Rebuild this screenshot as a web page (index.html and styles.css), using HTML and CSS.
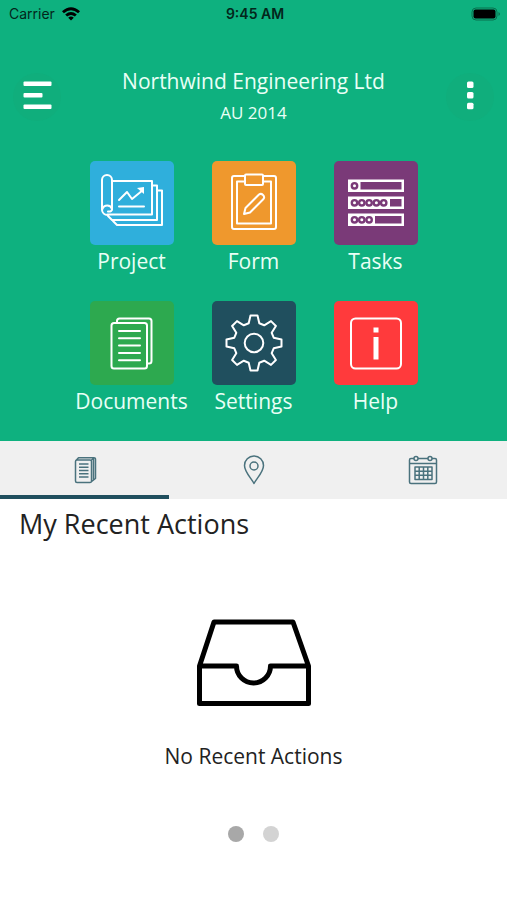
FILE: index.html
```html
<!DOCTYPE html>
<html lang="en">
<head>
<meta charset="utf-8">
<meta name="viewport" content="width=device-width, initial-scale=1">
<title>Northwind Engineering Ltd</title>
<link rel="stylesheet" href="styles.css">
</head>
<body>
<header class="hero">
  <div class="status">
    <div class="carrier">
      <span>Carrier</span>
      <svg class="wifi" viewBox="0 0 18 14" aria-hidden="true"><path d="M0 4.3Q9-3.6 18 4.3L16.1 6.3Q9 .2 1.9 6.3ZM3.2 7.5Q9 2.6 14.8 7.5L12.9 9.5Q9 6.3 5.1 9.5ZM6.2 10.7Q9 8.3 11.800 10.7L9 13.6Z"/></svg>
    </div>
    <span class="time">9:45 AM</span>
    <svg class="battery" viewBox="0 0 30 14" aria-hidden="true"><rect x="1" y="1" width="25" height="12" rx="4" fill="none" stroke="#08714f"/><rect x="2.500" y="2.500" width="22" height="9" rx="2"/><path d="M27.500 5q3 2 0 4z" fill="#08714f"/></svg>
  </div>
  <div class="bar">
    <button class="round" type="button" aria-label="Menu"><svg viewBox="0 0 48 48" fill="#fff"><rect x="10.500" y="8.500" width="28" height="4.500" rx="1"/><rect x="10.500" y="20" width="19" height="4.500" rx="1"/><rect x="10.500" y="31.500" width="28" height="4.500" rx="1"/></svg></button>
    <div class="heading">
      <h1>Northwind Engineering Ltd</h1>
      <p>AU 2014</p>
    </div>
    <button class="round" type="button" aria-label="More options"><svg viewBox="0 0 48 48" fill="#fff"><rect x="21" y="8.500" width="6.500" height="6.500" rx="1.500"/><rect x="21" y="19" width="6.500" height="6.500" rx="1.500"/><rect x="21" y="29.700" width="6.500" height="6.500" rx="1.500"/></svg></button>
  </div>
  <nav class="tiles">
    <a class="tile" href="#project">
      <svg class="icon blue" viewBox="0 0 84 84"><path d="M22 20H62V53.500H17.500M22 49V19a5 5 0 0 0-10 0V49a5.500 5.500 0 0 0 5.500 5M12.500 48a5 5 0 0 1 9.500 0q0 3-4 2.500M63 24.500H67V59H22l-4-4M68 29.500H72V64H27l-4-4"/><path d="M29 39l8-8 5 7 11-9M29 45.500H54"/><path d="M47 27l7-1v7z" fill="#fff" stroke="none"/></svg>
      <span>Project</span>
    </a>
    <a class="tile" href="#form">
      <svg class="icon orange" viewBox="0 0 84 84"><path d="M33 15H22a2 2 0 0 0-2 2V66a2 2 0 0 0 2 2H62a2 2 0 0 0 2-2V17a2 2 0 0 0-2-2H51M33 20.500H25V62.500H59V20.500H51"/><rect x="33" y="13.500" width="18" height="10.500" rx="1"/><path d="M32 53l1.500-6L47 33.500q2-1.500 4 .5t.5 4L38 51.500z"/></svg>
      <span>Form</span>
    </a>
    <a class="tile" href="#tasks">
      <svg class="icon purple" viewBox="0 0 84 84"><g fill="#fff" stroke="none"><path d="M14 18.500H70V31H14zM14 35.500H70V48H14zM14 52.500H70V65H14z"/></g><g fill="#7a3a78" stroke="none"><path d="M26.500 21H67.500V28.500H26.500zM56 38H67.500V45.500H56zM41 55H67.500V62.500H41z"/></g><g fill="#fff" stroke="#7a3a78" stroke-width="2.400"><circle cx="20.500" cy="24.800" r="2.700"/><circle cx="20.500" cy="41.800" r="2.700"/><circle cx="27.800" cy="41.800" r="2.700"/><circle cx="35.100" cy="41.800" r="2.700"/><circle cx="42.400" cy="41.800" r="2.700"/><circle cx="49.700" cy="41.800" r="2.700"/><circle cx="20.500" cy="58.800" r="2.700"/><circle cx="27.800" cy="58.800" r="2.700"/><circle cx="35.100" cy="58.800" r="2.700"/></g></svg>
      <span>Tasks</span>
    </a>
    <a class="tile" href="#documents">
      <svg class="icon green" viewBox="0 0 84 84"><rect x="21.500" y="22" width="35.500" height="45.500" rx="2.500"/><path d="M27 22V20a2.500 2.500 0 0 1 2.500-2.500H59a2.500 2.500 0 0 1 2.500 2.500V60a2.500 2.500 0 0 1-2.500 2.500H57M29 30H50M29 37.300H50M29 44.600H50M29 52H50M29 59.300H50"/></svg>
      <span>Documents</span>
    </a>
    <a class="tile" href="#settings">
      <svg class="icon navy" viewBox="0 0 84 84"><circle cx="42" cy="42" r="9.300"/><path d="M38.500 14.500H45.500L47.300 22.300L52.200 24.300L59 20.100L63.900 25L59.700 31.800L61.700 36.700L69.500 38.500V45.500L61.700 47.300L59.700 52.200L63.900 59L59 63.900L52.200 59.700L47.300 61.700L45.500 69.500H38.500L36.700 61.700L31.800 59.700L25 63.900L20.100 59L24.300 52.200L22.300 47.300L14.500 45.500V38.500L22.300 36.700L24.300 31.800L20.100 25L25 20.100L31.800 24.300L36.700 22.300Z"/></svg>
      <span>Settings</span>
    </a>
    <a class="tile" href="#help">
      <svg class="icon red" viewBox="0 0 84 84"><rect x="17" y="17.500" width="50" height="50" rx="4.500"/><path d="M39.500 26.500H44.500V31.500H39.500zM39.500 36H44.500V58.500H39.500z" fill="#fff" stroke="none"/></svg>
      <span>Help</span>
    </a>
  </nav>
</header>
<nav class="tabs">
  <a class="tab active" href="#recent" aria-label="Recent actions"><svg viewBox="0 0 30 30"><path d="M7 5H20a1.500 1.500 0 0 1 1.500 1.500V26a1.500 1.500 0 0 1-1.500 1.500H7A1.500 1.500 0 0 1 5.500 26V6.500A1.500 1.500 0 0 1 7 5ZM6 5.500L8.500 2.700H24a1.500 1.500 0 0 1 1.500 1.500V23.500L21 27M21 5.500l3-2.500M23.500 4V25"/><path d="M9 9H18.500M9 12.200H18.500M9 15.500H18.500M9 18.800H18.500M9 22H18.500"/></svg></a>
  <a class="tab" href="#location" aria-label="Location"><svg viewBox="0 0 30 30"><path d="M15 28.500C12.500 23.500 5.500 17 5.500 10.500a9.500 9.500 0 0 1 19 0C24.500 17 17.500 23.500 15 28.500Z"/><circle cx="15" cy="11" r="4"/></svg></a>
  <a class="tab" href="#calendar" aria-label="Calendar"><svg viewBox="0 0 30 30"><path d="M6 3.500H3A1.500 1.500 0 0 0 1.500 5V27A1.500 1.500 0 0 0 3 28.500H27A1.500 1.500 0 0 0 28.500 27V5A1.500 1.500 0 0 0 27 3.500H24M10 3.500H20M1.500 8.500H28.500M7 12H24V24.500H7zM7 16.200H24M7 20.300H24M11.200 12V24.500M15.500 12V24.500M19.800 12V24.500"/><circle cx="8" cy="3.500" r="2"/><circle cx="22" cy="3.500" r="2"/></svg></a>
</nav>
<main class="recent">
  <h2>My Recent Actions</h2>
  <div class="empty">
    <svg class="tray" viewBox="0 0 114 88" aria-hidden="true"><path d="M2.500 47L17 3H96L111.500 47V84.500H2.500ZM2.500 47H39.500a17 17 0 0 0 34 0H111.500"/></svg>
    <p>No Recent Actions</p>
  </div>
  <div class="dots"><button class="dot on" type="button" aria-label="Page 1"></button><button class="dot" type="button" aria-label="Page 2"></button></div>
</main>
</body>
</html>
```
FILE: styles.css
```css
* { box-sizing: border-box; }
body {
  margin: 0;
  background: #fff;
  color: #222;
  font-family: "Open Sans", "Noto Sans", sans-serif;
}
h1, h2, p { margin: 0; font-weight: 400; }
button { border: 0; padding: 0; }
a { color: inherit; text-decoration: none; }
svg { display: block; overflow: visible; }

.hero {
  background: #0eb17f;
  color: #e9fff6;
  padding-bottom: 23px;
}
.status {
  display: grid;
  grid-template-columns: 1fr auto 1fr;
  align-items: center;
  height: 28px;
  padding: 0 6px 0 9px;
  color: #03261b;
  font: 14px/20px Inter, sans-serif;
}
.carrier { display: flex; align-items: center; gap: 7px; }
.wifi { width: 18px; height: 14px; fill: #000; }
.time { font-weight: 600; }
.battery { width: 30px; height: 14px; justify-self: end; }

.bar {
  display: flex;
  justify-content: space-between;
  align-items: center;
  height: 133px;
  padding: 5px 13px 0;
}
.round {
  width: 48px;
  height: 48px;
  border-radius: 50%;
  background: #10ae7c;
}
.heading { text-align: center; }
.heading h1 { font-size: 21px; line-height: 32px; }
.heading p { font-size: 17px; line-height: 32px; }

.tiles {
  display: grid;
  grid-template-columns: repeat(3, 122px);
  justify-content: center;
  row-gap: 23px;
}
.tile {
  display: flex;
  flex-direction: column;
  align-items: center;
  font-size: 21px;
  line-height: 33px;
}
.icon {
  width: 84px;
  height: 84px;
  border-radius: 5px;
  fill: none;
  stroke: #fff;
  stroke-width: 2;
  stroke-linecap: round;
  stroke-linejoin: round;
}
.blue { background: #2fafdc; }
.orange { background: #ef982d; }
.purple { background: #7a3a78; }
.green { background: #2da94f; }
.navy { background: #204f5e; }
.red { background: #ff3a3c; }

.tabs {
  display: grid;
  grid-template-columns: repeat(3, 1fr);
  height: 58px;
  background: #f0f0f0;
}
.tab {
  display: flex;
  justify-content: center;
  align-items: center;
}
.tab svg {
  width: 30px;
  height: 30px;
  fill: none;
  stroke: #4a727d;
  stroke-width: 1.5;
  stroke-linejoin: round;
}
.active { box-shadow: inset 0 -4px #204f5e; }

.recent h2 {
  padding: 5px 19px;
  font-size: 27px;
  line-height: 40px;
}
.empty {
  display: flex;
  flex-direction: column;
  align-items: center;
  gap: 33px;
  padding-top: 70px;
  font-size: 21px;
  line-height: 32px;
}
.tray {
  width: 114px;
  height: 88px;
  fill: none;
  stroke: #000;
  stroke-width: 5;
  stroke-linejoin: round;
}
.dots { display: flex; justify-content: center; gap: 19px; padding-top: 54px; }
.dot { width: 16px; height: 16px; border-radius: 50%; background: #d3d3d3; }
.on { background: #a8a8a8; }
```
